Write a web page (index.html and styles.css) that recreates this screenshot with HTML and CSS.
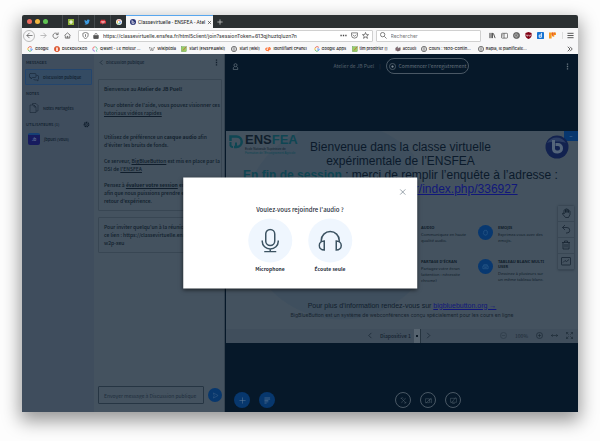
FILE: index.html
```html
<!DOCTYPE html>
<html lang="fr">
<head>
    <meta charset="UTF-8">
    <meta name="viewport" content="width=device-width, initial-scale=1.0">
    <title>Classevirtuelle - ENSFEA - Atelier de JB Puel</title>
    <link rel="stylesheet" href="styles.css">
</head>
<body>
    <div class="window">
        <div class="tabs">
            <span class="light red"></span><span class="light yellow"></span><span class="light green"></span>
            <div class="pins">
                <span class="pin"><svg viewBox="0 0 16 16"><rect width="16" height="16" fill="#8fb339"/><path d="M8 3v10M3 8h10" stroke="#fff" stroke-width="3"/></svg></span>
                <span class="pin"><svg viewBox="0 0 16 16"><path d="M1 13c2 0 3-.4 4-1.300-1.500-.2-2.500-1-3-2.200h1.300C1.800 8.800 1 7.600 1 6l1.400.4C1 5 1 3.500 1.700 2.300 3.500 4.300 5.500 5.400 8 5.500 7.500 3 9 1.500 11 1.500c1 0 1.700.4 2.300 1l2-.7-1.300 1.800 1.800-.4-1.600 1.700C14.300 11 10 15 5.500 14.600 4 14.500 2 14 1 13z" fill="#3d9be0"/></svg></span>
                <span class="pin"><svg viewBox="0 0 16 16"><path d="M2 2h12v3h2v7h-6l-4 3v-3H0V5h2z" fill="#d8343c"/><path d="M3 7h10M4 10h8" stroke="#fff" stroke-width="1.500"/></svg></span>
                <span class="pin"><svg viewBox="0 0 16 16"><circle cx="8" cy="8" r="8" fill="#fff"/><path d="M12 5a5 5 0 0 0-8 0" stroke="#e34133" stroke-width="2" fill="none"/><path d="M4 5a5 5 0 0 0 0 6" stroke="#f4b400" stroke-width="2" fill="none"/><path d="M4 11a5 5 0 0 0 7 1" stroke="#34a853" stroke-width="2" fill="none"/><path d="M8 8h5c0 2-1 3-2 4" stroke="#4285f4" stroke-width="2" fill="none"/></svg></span>
            </div>
            <div class="tab">
                <svg viewBox="0 0 16 16"><circle cx="8" cy="8" r="8" fill="#283274"/><path d="M5.500 3v8a2 2 0 0 0 2 1.500h1.500a2 2 0 0 0 2-2v-1a2 2 0 0 0-2-2H6" stroke="#fff" stroke-width="2" fill="none"/></svg>
                <span class="tab-title">Classevirtuelle - ENSFEA - Atel</span>
                <button class="plain" aria-label="Fermer l'onglet"><svg viewBox="0 0 16 16"><path d="M3 3l10 10M13 3L3 13" stroke="#333" stroke-width="2"/></svg></button>
            </div>
            <button class="plain new-tab" aria-label="Nouvel onglet"><svg viewBox="0 0 16 16"><path d="M8 1v14M1 8h14" stroke="#ccc" stroke-width="2"/></svg></button>
        </div>

        <div class="navbar">
            <button class="plain back" aria-label="Précédent"><svg viewBox="0 0 16 16"><path d="M15 8H2M8 2L2 8l6 6"/></svg></button>
            <button class="plain faded" aria-label="Suivant"><svg viewBox="0 0 16 16"><path d="M1 8h13M8 2l6 6-6 6"/></svg></button>
            <button class="plain" aria-label="Actualiser"><svg viewBox="0 0 16 16"><path d="M13 5a6 6 0 1 0 1 5M14 1v5H9"/></svg></button>
            <button class="plain" aria-label="Accueil"><svg viewBox="0 0 16 16"><path d="M1 8l7-6 7 6M3 8v6h10V8M7 14v-4h2v4"/></svg></button>
            <div class="field url">
                <svg viewBox="0 0 16 16"><path d="M8 1l6 2v4c0 4-3 7-6 8-3-1-6-4-6-8V3zM8 5v6"/></svg>
                <svg viewBox="0 0 16 16" class="lock"><rect x="2" y="7" width="12" height="8" fill="#555"/><path d="M5 7V4a3 3 0 0 1 6 0v3"/></svg>
                <input type="text" aria-label="Adresse" value="https://classevirtuelle.ensfea.fr/html5client/join?sessionToken=613qjhuztqluzn7n">
                <svg viewBox="0 0 16 16"><path d="M1 8h3M6.500 8h3M12 8h3" stroke-width="3"/></svg>
                <svg viewBox="0 0 16 16"><path d="M1 2h14v5a7 7 0 0 1-14 0zM4 6l4 4 4-4"/></svg>
                <svg viewBox="0 0 16 16"><path d="M8 1l2 5h5l-4 3.500 1.500 5L8 11.500l-4.500 3 1.500-5L1 6h5z"/></svg>
            </div>
            <div class="field search">
                <svg viewBox="0 0 16 16"><circle cx="6" cy="6" r="5"/><path d="M10 10l5 5"/></svg>
                <input type="text" aria-label="Rechercher" placeholder="Rechercher">
            </div>
            <div class="addons">
                <svg viewBox="0 0 16 16"><path d="M2 2v12M5 2v12M8 2v12M10 3l4 11" stroke-width="2"/></svg>
                <svg viewBox="0 0 16 16"><rect x="1" y="3" width="14" height="11" rx="2"/><path d="M7 3v11M3 6h2M3 9h2"/></svg>
                <svg viewBox="0 0 16 16"><circle cx="8" cy="8" r="7" fill="#777"/><path d="M4 6l3-2 4 3-3 5-4-2z" stroke="#bbb"/></svg>
                <svg viewBox="0 0 16 16"><path d="M8 0l7 2v6c0 4-4 7-7 8-3-1-7-4-7-8V2z" fill="#800014" stroke="none"/><path d="M4 6v3h3V6M9 9h3V6" stroke="#fff"/></svg>
                <svg viewBox="0 0 16 16"><rect width="16" height="16" rx="2" fill="#1673d2" stroke="none"/><path d="M10 2v10H5V7h5" stroke="#fff" stroke-width="2"/></svg>
                <svg viewBox="0 0 16 16"><path d="M0 1h16v6h-4v4H8V6H6v9H0z" fill="#f59a23" stroke="none"/><path d="M8 1v8M12 1v5" stroke="#e8502f" stroke-width="2"/></svg>
            </div>
            <button class="plain menu" aria-label="Menu"><svg viewBox="0 0 16 16"><path d="M1 3h14M1 8h14M1 13h14" stroke-width="2"/></svg></button>
        </div>

        <div class="bookmarks">
            <a href="#"><svg viewBox="0 0 16 16"><path d="M13 4a6 6 0 0 0-10 1" stroke="#e34133"/><path d="M3 5a6 6 0 0 0 0 6" stroke="#f4b400"/><path d="M3 11a6 6 0 0 0 8 2" stroke="#34a853"/><path d="M8 8h6c0 2-1 4-3 5" stroke="#4285f4"/></svg>Google</a>
            <a href="#"><svg viewBox="0 0 16 16"><circle cx="8" cy="8" r="7" fill="#de5833" stroke="#de5833"/><path d="M8 4v9" stroke="#fff" stroke-width="4"/></svg>DuckDuckGo</a>
            <a href="#"><svg viewBox="0 0 16 16"><path d="M8 2a6 6 0 0 0-6 6" stroke="#f05a5a"/><path d="M2 8a6 6 0 0 0 6 6" stroke="#8a63d2"/><path d="M8 2a6 6 0 0 1 3 11l3 2" stroke="#5ac3a0"/></svg>Qwant - Le moteur ...</a>
            <a href="#"><svg viewBox="0 0 16 16"><path d="M0 4h4M1 4l4 9 4-8M6 4l4 9 4-9M12 4h4" stroke="#333" stroke-width="1"/></svg>Wikipédia</a>
            <a href="#"><svg viewBox="0 0 16 16"><rect x="1" y="2" width="13" height="13" fill="#9bcf62" stroke="#4b8b3b" stroke-width="1"/><path d="M5 12l9-10" stroke="#c9563c"/></svg>start [ENSFEAwiki]</a>
            <a href="#"><svg viewBox="0 0 16 16"><use href="#globe"/></svg>start [wiki]</a>
            <a href="#"><svg viewBox="0 0 16 16"><path d="M7 6a3 3 0 1 0 0 5M8 14l3-10a3 3 0 1 1 0 6" stroke="#ff6c2c" stroke-width="3"/></svg>Identifiant cPanel</a>
            <a href="#"><svg viewBox="0 0 16 16"><path d="M13 4a6 6 0 0 0-10 1" stroke="#e34133"/><path d="M3 5a6 6 0 0 0 0 6" stroke="#f4b400"/><path d="M3 11a6 6 0 0 0 8 2" stroke="#34a853"/><path d="M8 8h6c0 2-1 4-3 5" stroke="#4285f4"/></svg>Google Apps</a>
            <a href="#"><svg viewBox="0 0 16 16"><rect x="1" y="2" width="13" height="13" fill="#9bcf62" stroke="#4b8b3b" stroke-width="1"/><path d="M5 12l9-10" stroke="#c9563c"/></svg>tim prodtrier []</a>
            <a href="#"><svg viewBox="0 0 16 16"><path d="M2 12V5l5-3v11M7 14l7-3V4L9 6z" fill="#8a6570" stroke="#444" stroke-width="1"/></svg>accueil</a>
            <a href="#"><svg viewBox="0 0 16 16"><g id="globe"><circle cx="8" cy="8" r="7" stroke="#555"/><path d="M8 1v14M1 8h14M4 3c2 3 6 3 8 0M4 13c2-3 6-3 8 0" stroke="#555" stroke-width="1"/></g></svg>Cours : 1920-Contin...</a>
            <a href="#"><svg viewBox="0 0 16 16"><use href="#globe"/></svg>Rapla, le planificate...</a>
            <button class="plain" aria-label="Plus de marque-pages"><svg viewBox="0 0 16 16"><path d="M2 2l6 6-6 6M8 2l6 6-6 6" stroke="#333"/></svg></button>
        </div>

        <div class="app">
            <aside class="sidebar">
                <h2>MESSAGES</h2>
                <a href="#" class="item selected"><svg viewBox="0 0 20 20"><path d="M2 3h10a2 2 0 0 1 2 2v4a2 2 0 0 1-2 2H7l-3 3v-3H2a1 1 0 0 1-1-1V4zM15 7h2a2 2 0 0 1 2 2v5l-1 1v3l-3-2h-4l-2-2"/></svg>Discussion publique</a>
                <h2>NOTES</h2>
                <a href="#" class="item"><svg viewBox="0 0 20 20"><path d="M7 4V1h7l4 4v11h-4M2 4h8l4 4v11H2zM10 4v4h4"/></svg>Notes Partagées</a>
                <h2>UTILISATEURS (1)
                    <button class="plain" aria-label="Gérer les utilisateurs"><svg viewBox="0 0 16 16"><circle cx="8" cy="8" r="5" stroke-width="3" stroke-dasharray="3 1"/><circle cx="8" cy="8" r="2"/></svg></button>
                </h2>
                <div class="item user"><span class="avatar">Jb</span>jbpuel (Vous)</div>
            </aside>

            <section class="chat">
                <header>
                    <button class="plain chat-title"><svg viewBox="0 0 16 16"><path d="M10 3L5 8l5 5"/></svg>Discussion publique</button>
                    <button class="plain dots" aria-label="Options de discussion"><svg viewBox="0 0 16 16"><path d="M8 1v3M8 6.500v3M8 12v3"/></svg></button>
                </header>
                <div class="message">
                    <p>Bienvenue au <b>Atelier de JB Puel!</b></p>
                    <p>Pour obtenir de l'aide, vous pouvez visionner ces<br><a href="#">tutoriaux vidéos rapides</a></p>
                    <p class="spaced">Utilisez de préférence un <b>casque audio</b> afin<br>d'éviter les bruits de fonds.</p>
                    <p>Ce serveur, <a href="#">BigBlueButton</a> est mis en place par la<br>DSI de <a href="#">l'ENSFEA</a></p>
                    <p>Pensez à <a href="#"><b>évaluer votre session</b></a> en fin<br>afin que nous puissions prendre en compte<br>retour d'expérience.</p>
                </div>
                <div class="message">
                    <p>Pour inviter quelqu'un à la réunion,<br>ce lien : https://classevirtuelle.ensfea.fr/<br>w2p-xeu</p>
                </div>
                <form class="composer">
                    <input type="text" aria-label="Message" placeholder="Envoyer message à Discussion publique">
                    <button type="button" class="round send" aria-label="Envoyer"><svg viewBox="0 0 16 16"><path d="M3 2l11 6-11 6 2-6z"/></svg></button>
                </form>
            </section>

            <main class="stage">
                <header class="topbar">
                    <button class="plain" aria-label="Utilisateurs"><svg viewBox="0 0 16 16"><circle cx="8" cy="5" r="3.500"/><path d="M6 8l-3 3v4h10v-4l-3-3"/></svg></button>
                    <div class="room">
                        <span>Atelier de JB Puel</span><span class="bar">|</span>
                        <button class="record"><svg viewBox="0 0 16 16"><circle cx="8" cy="8" r="7"/><circle cx="8" cy="8" r="2" fill="#8a97a3"/></svg>Commencer l'enregistrement</button>
                    </div>
                    <button class="plain" aria-label="Options"><svg viewBox="0 0 16 16"><path d="M8 1v3M8 6.500v3M8 12v3" stroke-width="3"/></svg></button>
                </header>

                <div class="media">
                    <div class="slide">
                        <div class="logo">
                            <svg viewBox="0 0 28 28"><path d="M3 12V3h12a10 10 0 0 1 0 21h-5" fill="none" stroke="#0f4653" stroke-width="5"/><path d="M3 14v7a5 5 0 0 0 5 3M10 24h4v-9" fill="none" stroke="#0f4653" stroke-width="4"/></svg>
                            <div>
                                <strong>ENS<em>FEA</em></strong>
                                <small>Ecole Nationale Supérieure de</small>
                                <small class="teal">Formation de l'Enseignement Agricole</small>
                            </div>
                        </div>
                        <button class="minimize" aria-label="Réduire">–</button>
                        <svg class="bbb" viewBox="0 0 24 24"><circle cx="12" cy="12" r="11.500" fill="#12224f"/><path d="M2 8a11 11 0 0 1 19 0c-5-2-13-2-19 0z" fill="#2c3e63"/><path d="M8.500 5v9a3.500 3.500 0 0 0 3.500 3h1a3.500 3.500 0 0 0 3.500-3.500v-.5A3.500 3.500 0 0 0 13 9.500h-2.500" fill="none" stroke="#54657a" stroke-width="3"/></svg>
                        <h1>Bienvenue dans la classe virtuelle<br>expérimentale de l’ENSFEA<br><b>En fin de session</b> : merci de remplir l’enquête à l’adresse :<br><a href="#">https://enquetes.ensfea.fr/index.php/336927</a></h1>
                        <div class="features">
                            <div class="feature"><span class="disc"><svg viewBox="0 0 16 16"><path d="M3 6h3l4-3v10l-4-3H3z"/></svg></span><div><h3>AUDIO</h3><p>Communiquez en haute<br>qualité audio.</p></div></div>
                            <div class="feature"><span class="disc"><svg viewBox="0 0 16 16"><path d="M4 8V5l2-1V3h2l1-1 1 2 2 1v6l-2 3H6l-3-4z"/></svg></span><div><h3>EMOJIS</h3><p>Exprimez-vous avec des<br>emojis.</p></div></div>
                            <div class="feature"><span class="disc"><svg viewBox="0 0 16 16"><path d="M2 3h12v8H2zM5 14h6"/></svg></span><div><h3>PARTAGE D'ÉCRAN</h3><p>Partagez votre écran<br>(attention : nécessite<br>chrome)</p></div></div>
                            <div class="feature"><span class="disc"><svg viewBox="0 0 16 16"><path d="M2 7h12v6H2zM4 7V4h8v3M5 10h6"/></svg></span><div><h3>TABLEAU BLANC MULTI<br>USER</h3><p>Dessinez à plusieurs sur<br>un même tableau blanc.</p></div></div>
                        </div>
                        <p class="more">Pour plus d’information rendez-vous sur <a href="#">bigbluebutton.org →</a></p>
                        <p class="about">BigBlueButton est un système de webconférences conçu spécialement pour les cours en ligne</p>
                        <div class="tools">
                            <button aria-label="Déplacer"><svg viewBox="0 0 20 20"><path d="M6 12V5a1.500 1.500 0 0 1 3 0v4-6a1.500 1.500 0 0 1 3 0v6-5a1.500 1.500 0 0 1 3 0v5-2a1.500 1.500 0 0 1 3 0v6l-3 6H9l-6-7a1.500 1.500 0 0 1 3-1z"/></svg></button>
                            <button aria-label="Annuler"><svg viewBox="0 0 20 20"><path d="M8 2L3 7l5 5M3 7h9a5 5 0 0 1 0 11h-2"/></svg></button>
                            <button aria-label="Effacer"><svg viewBox="0 0 20 20"><path d="M2 5h16M7 5V2h6v3M4 5v13h12V5M8 8v7M12 8v7"/></svg></button>
                            <button aria-label="Tableau blanc multi-utilisateur"><svg viewBox="0 0 20 20"><rect x="1" y="3" width="18" height="15" rx="1"/><path d="M4 13l4-4 3 2 5-4"/></svg></button>
                        </div>
                    </div>
                    <div class="slide-bar">
                        <div class="pager">
                            <button class="plain" aria-label="Diapositive précédente"><svg viewBox="0 0 16 16"><path d="M10 2L4 8l6 6"/></svg></button>
                            <select aria-label="Diapositive"><option>Diapositive 1</option></select>
                            <button class="plain" aria-label="Diapositive suivante"><svg viewBox="0 0 16 16"><path d="M5 2l6 6-6 6"/></svg></button>
                        </div>
                        <div class="zoom">
                            <button class="plain faded" aria-label="Zoom arrière"><svg viewBox="0 0 16 16"><circle cx="8" cy="8" r="7"/><path d="M4 8h8"/></svg></button>
                            <span>100%</span>
                            <button class="plain" aria-label="Zoom avant"><svg viewBox="0 0 16 16"><circle cx="8" cy="8" r="7"/><path d="M4 8h8M8 4v8"/></svg></button>
                            <button class="plain" aria-label="Ajuster à la largeur"><svg viewBox="0 0 16 16"><path d="M0 8h16M4 5L1 8l3 3M12 5l3 3-3 3"/></svg></button>
                            <button class="plain" aria-label="Plein écran"><svg viewBox="0 0 16 16"><path d="M1 5V1h4M1 1l5 5M11 1h4v4M15 1l-5 5M1 11v4h4M1 15l5-5M15 11v4h-4M15 15l-5-5"/></svg></button>
                        </div>
                    </div>
                </div>

                <footer class="actions">
                    <div class="group left">
                        <button class="round" aria-label="Actions"><svg viewBox="0 0 16 16"><path d="M8 1v14M1 8h14"/></svg></button>
                        <button class="round" aria-label="Sondage"><svg viewBox="0 0 16 16"><path d="M1 2h13M1 5h13M1 8h9M1 11h9M1 14h5"/></svg></button>
                    </div>
                    <div class="group">
                        <button class="round outline" aria-label="Rejoindre l'audio"><svg viewBox="0 0 16 16"><path d="M2 2l12 12M4 14c0-3 2-5 4-6s4-3 4-6M2 4c1-3 4-3 6-1M14 11c0 3-3 4-5 2"/></svg></button>
                        <button class="round outline" aria-label="Partager la webcam"><svg viewBox="0 0 16 16"><path d="M1 4h9v9H1zM10 8l5-4v9l-3-2M2 14L14 2"/></svg></button>
                        <button class="round outline" aria-label="Partager l'écran"><svg viewBox="0 0 16 16"><path d="M1 3h14v9H1zM5 15h6M3 14L13 1"/></svg></button>
                    </div>
                </footer>
            </main>

            <div class="modal" role="dialog" aria-labelledby="audio-title">
                <button class="plain close" aria-label="Fermer"><svg viewBox="0 0 16 16"><path d="M2 2l12 12M14 2L2 14"/></svg></button>
                <h2 id="audio-title">Voulez-vous rejoindre l'audio ?</h2>
                <div class="choices">
                    <button class="choice">
                        <span class="bubble"><svg viewBox="0 0 24 24"><rect x="7.500" y="1" width="9" height="16" rx="4.500"/><path d="M4 12v1a8 7.500 0 0 0 16 0v-1M12 20.500V23M6 23.300h12"/></svg></span>
                        Microphone
                    </button>
                    <button class="choice">
                        <span class="bubble"><svg viewBox="0 0 24 24"><path d="M3 13v-1a9 9 0 0 1 18 0v1M6 12.500v9c-3 0-5-2-5-4.500s2-4.500 5-4.500zM18 12.500v9c3 0 5-2 5-4.500s-2-4.500-5-4.500z"/></svg></span>
                        Écoute seule
                    </button>
                </div>
            </div>
        </div>
    </div>
</body>
</html>
```

FILE: styles.css
```css
* {
    box-sizing: border-box;
}
body {
    margin: 0;
    min-height: 100vh;
    padding: 15px 22px 29px;
    display: flex;
    background: #fdfdfd;
    font-family: "Noto Sans CJK JP", "Open Sans", sans-serif;
    font-size: 5px;
    line-height: 8px;
}
h1, h2, h3, p {
    margin: 0;
}
svg {
    display: block;
    width: 7px;
    height: 7px;
    fill: none;
    stroke: currentColor;
    stroke-width: 1.5;
    flex: none;
}
button, input, select {
    font: inherit;
    color: inherit;
}
button {
    padding: 0;
    border: none;
    cursor: pointer;
}
.plain {
    background: none;
    display: flex;
    align-items: center;
    justify-content: center;
}
.window {
    flex: 1;
    min-width: 0;
    display: flex;
    flex-direction: column;
    border-radius: 2px;
    box-shadow: 0 7px 18px 2px rgba(0, 0, 0, 0.4);
    background: #f7f7f8;
}

/* Browser chrome */
.tabs, .navbar, .bookmarks {
    font-family: Inter, sans-serif;
}
.tabs {
    height: 13px;
    display: flex;
    align-items: center;
    gap: 3px;
    padding-left: 5px;
    background: #2b3032;
    border-radius: 2px 2px 0 0;
}
.tabs svg {
    width: 6px;
    height: 6px;
    stroke: none;
}
.light {
    width: 5px;
    height: 5px;
    border-radius: 50%;
}
.red { background: #ed6a5e; }
.yellow { background: #f0b63f; }
.green { background: #5fc454; }
.pins {
    display: flex;
    margin-left: 11px;
}
.pin {
    width: 16px;
    height: 13px;
    display: flex;
    align-items: center;
    justify-content: center;
    border-left: 1px solid #444a4d;
}
.tab {
    width: 87px;
    height: 13px;
    margin-left: -3px;
    padding: 0 4px;
    display: flex;
    align-items: center;
    gap: 2px;
    background: #f7f7f8;
    border-top: 1px solid #58a6ee;
    color: #222;
    font-family: Roboto, sans-serif;
}
.tab-title {
    flex: 1;
    white-space: nowrap;
}
.tab .plain svg {
    width: 5px;
    height: 5px;
}
.new-tab {
    margin-left: 1px;
}
.navbar {
    height: 15px;
    display: flex;
    align-items: center;
    gap: 5px;
    padding: 0 4px 0 1px;
    color: #444;
}
.back {
    width: 12px;
    height: 12px;
    border: 1px solid #bbb;
    border-radius: 50%;
}
.faded {
    opacity: 0.5;
}
.field {
    height: 12px;
    display: flex;
    align-items: center;
    gap: 4px;
    padding: 0 3px;
    background: #fff;
    border: 1px solid #d0d0d0;
    border-radius: 1px;
}
.field input {
    flex: 1;
    min-width: 0;
    padding: 0;
    border: none;
    outline: none;
    background: none;
}
.url {
    flex: 297;
    margin-left: 2px;
}
.url input {
    font-weight: 500;
}
.url .lock {
    width: 6px;
    height: 6px;
}
.search {
    flex: 101;
    margin-left: -2px;
}
.search input::placeholder {
    color: #777;
}
.addons {
    display: flex;
    gap: 5px;
    padding: 0 1px 0 3px;
}
.menu {
    padding-left: 4px;
    border-left: 1px solid #ddd;
}
.bookmarks {
    height: 11px;
    display: grid;
    grid-template-columns:
        minmax(0, 27fr) minmax(0, 38fr) minmax(0, 57fr) minmax(0, 32fr)
        minmax(0, 50fr) minmax(0, 34fr) minmax(0, 48fr) minmax(0, 38fr)
        minmax(0, 43fr) minmax(0, 26fr) minmax(0, 57fr) minmax(0, 89fr) 7px;
    align-items: center;
    padding: 0 4px 0 5px;
    font-size: 4px;
    font-weight: 500;
}
.bookmarks a {
    display: flex;
    align-items: center;
    gap: 2px;
    color: #111;
    text-decoration: none;
    white-space: nowrap;
}
.bookmarks svg {
    width: 6px;
    height: 6px;
    stroke-width: 2;
}

/* Conference client */
.app {
    flex: 1;
    position: relative;
    display: grid;
    grid-template-columns: minmax(0, 72fr) minmax(0, 131fr) minmax(0, 353fr);
    background: #44525f;
    color: #101e2c;
}
.sidebar {
    padding: 4px 2px 4px 3px;
    background: #3f4d5d;
    color: #101e2d;
    font-size: 4px;
}
.sidebar h2 {
    display: flex;
    justify-content: space-between;
    margin: 0 1px 3px;
    padding-right: 1px;
    font-size: 4px;
    font-weight: 500;
}
.item {
    height: 16px;
    margin-bottom: 4px;
    padding-left: 4px;
    display: flex;
    align-items: center;
    gap: 4px;
    color: inherit;
    text-decoration: none;
    font-weight: 500;
    white-space: nowrap;
}
.item svg {
    width: 10px;
    height: 10px;
    stroke-width: 1;
}
.selected {
    padding-left: 3px;
    background: #344b63;
    border: 1px solid #23456d;
    border-radius: 1px;
}
.user {
    padding-left: 3px;
}
.avatar {
    width: 12px;
    height: 12px;
    border-radius: 2px;
    border-top: 2px solid #163f75;
    background: #171b5e;
    color: #65749a;
    text-align: center;
}
.chat {
    min-width: 0;
    padding: 4px 2px 8px 4px;
    display: flex;
    flex-direction: column;
    border-right: 1px solid #34424f;
}
.chat header {
    display: flex;
    justify-content: space-between;
    margin-bottom: 13px;
    padding-right: 2px;
}
.chat-title {
    gap: 1px;
    color: #142434;
    font-size: 4px;
    font-weight: 500;
}
.dots svg {
    stroke-width: 3;
}
.message {
    margin-bottom: 6px;
    padding: 5px 0 5px 5px;
    border: 1px solid #384653;
    border-radius: 1px;
    white-space: nowrap;
    overflow: hidden;
    font-weight: 500;
}
.message p + p {
    margin-top: 8px;
}
.message p.spaced {
    margin-top: 16px;
}
.message a {
    color: inherit;
}
.message b {
    font-weight: 700;
}
.composer {
    margin-top: auto;
    display: flex;
    align-items: center;
    gap: 4px;
}
.composer input {
    flex: 1;
    min-width: 0;
    height: 18px;
    padding: 0 5px;
    border: 1px solid #263543;
    border-radius: 1px;
    background: none;
}
.composer input::placeholder {
    color: #1e2d3c;
    opacity: 1;
}
.round {
    width: 16px;
    height: 16px;
    display: flex;
    align-items: center;
    justify-content: center;
    border-radius: 50%;
    background: #07376d;
    color: #7088a0;
}
.round svg {
    stroke-width: 1;
}
.round.send {
    width: 14px;
    height: 14px;
    color: #44658a;
}
.outline {
    background: none;
    border: 1px solid #4a5865;
    color: #5d6b78;
}

/* Stage: top bar, slide, action bar */
.stage {
    min-width: 0;
    display: flex;
    flex-direction: column;
    background: #061829;
}
.topbar {
    display: flex;
    align-items: center;
    justify-content: space-between;
    padding: 4px 7px 11px;
    color: #6b7883;
}
.room {
    display: flex;
    align-items: center;
    gap: 5px;
    color: #54616d;
}
.bar {
    color: #2e3d4c;
}
.record {
    height: 16px;
    padding: 0 2px;
    display: flex;
    align-items: center;
    gap: 3px;
    border: 1px solid #4a5865;
    border-radius: 8px;
    background: none;
    color: #65727d;
}
.media {
    flex: 1;
    display: flex;
    flex-direction: column;
    justify-content: center;
}
.slide {
    position: relative;
    aspect-ratio: 16 / 9;
    margin-left: 1px;
    padding-top: 9px;
    background: radial-gradient(circle at 115px 90px, #3f4f5e 98px, transparent 99px) 0 0 / 188px 100% no-repeat #44525f;
    font-family: "Liberation Sans", Arial, sans-serif;
    text-align: center;
}
.slide a {
    color: #11187a;
}
.slide h1 {
    padding-right: 3px;
    font-size: 12px;
    line-height: 14px;
    font-weight: 400;
    color: #0b1a2b;
    white-space: nowrap;
}
.slide h1 b {
    color: #0f4653;
}
/* School logo, corner badge and whiteboard tools lie over the slide */
.logo {
    position: absolute;
    top: 1px;
    left: 3px;
    display: flex;
    gap: 2px;
    text-align: left;
}
.logo svg {
    width: 14px;
    height: 14px;
    margin-top: 3px;
    stroke: none;
}
.logo strong {
    display: block;
    font-size: 13px;
    line-height: 15px;
}
.logo em {
    font-style: normal;
    color: #0f4653;
}
.logo small {
    display: block;
    font-size: 3px;
    line-height: 4px;
    white-space: nowrap;
}
.logo .teal {
    color: #0f4653;
}
.minimize {
    position: absolute;
    top: 0;
    right: 0;
    width: 14px;
    height: 10px;
    background: #07366e;
    color: #6a84a3;
}
.bbb {
    position: absolute;
    top: 4px;
    right: 9px;
    width: 24px;
    height: 24px;
    stroke: none;
}
.features {
    width: 160px;
    margin: 29px 0 0 175px;
    display: grid;
    grid-template-columns: 77px 1fr;
    row-gap: 8px;
    text-align: left;
    font-family: "Noto Sans", sans-serif;
    font-size: 4px;
    line-height: 6px;
    color: #101d2a;
}
.feature {
    min-height: 26px;
    display: flex;
    gap: 5px;
    white-space: nowrap;
}
.feature h3 {
    font-size: 4px;
    line-height: 5px;
    font-weight: 700;
    margin-bottom: 2px;
}
.disc {
    width: 15px;
    height: 15px;
    display: flex;
    align-items: center;
    justify-content: center;
    border-radius: 50%;
    background: #083870;
    color: #2c5b8b;
}
.more {
    margin-top: 16px;
    font-size: 7px;
    line-height: 10px;
    color: #101e2d;
}
.about {
    font-family: Inter, sans-serif;
    font-size: 5px;
    line-height: 9px;
    color: #17242f;
}
.tools {
    position: absolute;
    top: 75px;
    right: 4px;
    width: 16px;
    box-shadow: 0 0 2px #26343f;
}
.tools button {
    width: 16px;
    height: 16px;
    display: flex;
    align-items: center;
    justify-content: center;
    background: #44525f;
    border-bottom: 1px solid #394754;
    color: #14222f;
}
.tools svg {
    width: 10px;
    height: 10px;
}
.slide-bar {
    height: 14px;
    margin-left: 1px;
    padding-right: 5px;
    display: grid;
    grid-template-columns: 1fr auto 1fr;
    align-items: center;
    background: #404e5c;
    color: #14222f;
}
.pager, .zoom {
    display: flex;
    align-items: center;
}
.pager {
    grid-column: 2;
    gap: 4px;
}
.pager select {
    appearance: none;
    height: 14px;
    padding: 0 9px 0 2px;
    border: none;
    border-right: 1px solid #263440;
    border-radius: 0;
    /* light arrow box at the right with a dark mark in it */
    background:
        linear-gradient(#0b1825, #0b1825) right 2px center / 2px 2px no-repeat,
        linear-gradient(#56636f, #56636f) right / 6px 100% no-repeat;
    font-weight: 500;
}
.zoom {
    justify-content: flex-end;
    gap: 8px;
    color: #1b2935;
}
.actions {
    height: 24px;
    padding: 0 117px 0 9px;
    display: flex;
    align-items: center;
    justify-content: space-between;
}
.group {
    display: flex;
    gap: 9px;
}

/* Audio dialog */
.modal {
    position: absolute;
    top: 50%;
    left: 50%;
    transform: translate(-50%, -50%);
    width: 42%;
    padding: 11px 11px 16px;
    display: flex;
    flex-direction: column;
    align-items: center;
    background: #fff;
    box-shadow: 0 1px 4px rgba(0, 0, 0, 0.6);
    color: #1f2d3a;
}
.close {
    align-self: flex-end;
    color: #667481;
}
.modal h2 {
    margin: 9px 0 4px;
    font-size: 6px;
    line-height: 10px;
    font-weight: 500;
}
.choices {
    display: flex;
    gap: 16px;
}
.choice {
    background: none;
    font-weight: 700;
}
.bubble {
    width: 44px;
    height: 44px;
    margin-bottom: 2px;
    display: flex;
    align-items: center;
    justify-content: center;
    border-radius: 50%;
    background: #eff6fe;
    color: #3c5362;
}
.bubble svg {
    width: 24px;
    height: 24px;
    stroke-width: 1.5;
}
```
